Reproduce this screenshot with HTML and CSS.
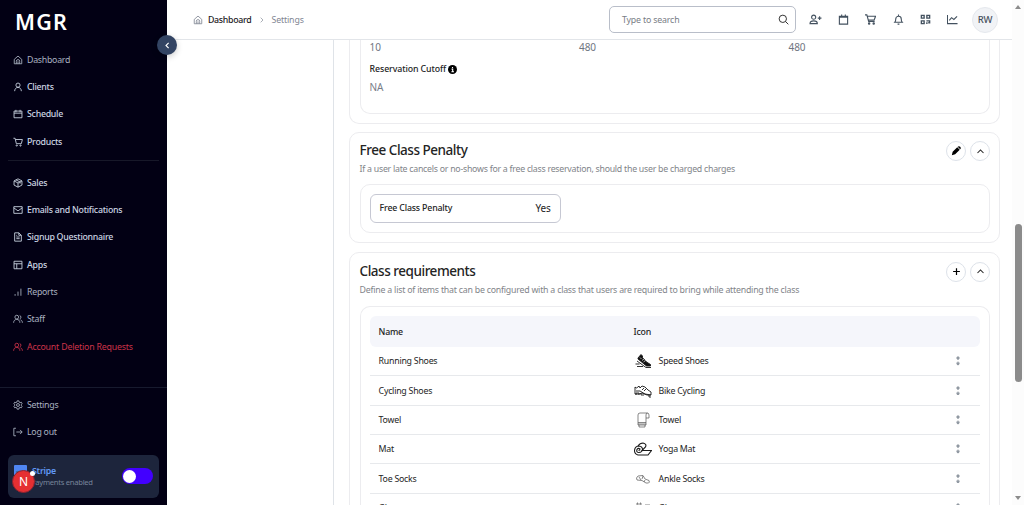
FILE: index.html
```html
<!DOCTYPE html>
<html lang="en">
<head>
<meta charset="utf-8">
<title>MGR - Settings</title>
<link rel="stylesheet" href="styles.css">
</head>
<body>
<svg class="defs" width="0" height="0" aria-hidden="true">
  <symbol id="home" viewBox="0 0 24 24"><path d="M3 10.500 12 2.500l9 8V21H3zM8 21v-6a4 4 0 0 1 8 0v6M12 15v6"/></symbol>
  <symbol id="users" viewBox="0 0 24 24"><circle cx="9" cy="7.500" r="4.500"/><path d="M1.500 21c0-5 3-8 7.500-8s7.500 3 7.500 8M16 3.500a4.500 4.500 0 0 1 0 8.500M18 14c3 1 4.500 3.500 4.500 7"/></symbol>
  <symbol id="up" viewBox="0 0 24 24"><path d="m4 16 8-8 8 8"/></symbol>
  <symbol id="cart" viewBox="0 0 24 24"><path d="M1 3h4l3 13h12l2.500-10H6"/><circle cx="9" cy="20.500" r="1.500"/><circle cx="18" cy="20.500" r="1.500"/></symbol>
</svg>
<div class="app">
  <aside class="sidebar">
    <div class="brand">MGR</div>
    <button class="collapse" aria-label="Collapse"><svg class="ic" viewBox="0 0 24 24"><path d="m15 5-7 7 7 7"/></svg></button>
    <nav class="nav">
      <a class="item"><svg class="ic"><use href="#home"/></svg><span>Dashboard</span></a>
      <a class="item strong"><svg class="ic" viewBox="0 0 24 24"><circle cx="12" cy="7.500" r="5"/><path d="M4 22c0-5 3-9 8-9s8 4 8 9"/></svg><span>Clients</span></a>
      <a class="item strong"><svg class="ic" viewBox="0 0 24 24"><path d="M2.500 5h19v16h-19zM2.500 10h19M7 2v6M17 2v6"/></svg><span>Schedule</span></a>
      <a class="item strong"><svg class="ic"><use href="#cart"/></svg><span>Products</span></a>
    </nav>
    <nav class="nav second">
      <a class="item strong"><svg class="ic" viewBox="0 0 24 24"><path d="m12 2 9.500 5v10L12 22l-9.500-5V7zM2.500 7 12 12l9.500-5M12 12v10M7 4.500l10 5v4"/></svg><span>Sales</span></a>
      <a class="item strong"><svg class="ic" viewBox="0 0 24 24"><path d="M2 4h20v16H2zM2 7l10 7 10-7"/></svg><span>Emails and Notifications</span></a>
      <a class="item strong"><svg class="ic" viewBox="0 0 24 24"><path d="M4 2h10l6 6v14H4zM14 2v6h6M8 12h8M8 16h8M8 8h2"/></svg><span>Signup Questionnaire</span></a>
      <a class="item strong"><svg class="ic" viewBox="0 0 24 24"><path d="M2.500 3h19v18h-19zM2.500 9h19M9 9v12"/></svg><span>Apps</span></a>
      <a class="item"><svg class="ic" viewBox="0 0 24 24"><path d="M5 21v-4M12 21V11M19 21V4"/></svg><span>Reports</span></a>
      <a class="item"><svg class="ic"><use href="#users"/></svg><span>Staff</span></a>
      <a class="item danger"><svg class="ic"><use href="#users"/></svg><span>Account Deletion Requests</span></a>
    </nav>
    <div class="foot">
      <a class="item"><svg class="ic" viewBox="0 0 24 24"><path d="m10 2-.700 3-2.300 1.300-3-1L2 9l2.200 2v2L2 15l2 3.700 3-1L9.300 19l.700 3h4l.700-3 2.300-1.300 3 1L22 15l-2.200-2v-2L22 9l-2-3.700-3 1L14.700 5 14 2z"/><circle cx="12" cy="12" r="3.500"/></svg><span>Settings</span></a>
      <a class="item"><svg class="ic" viewBox="0 0 24 24"><path d="M7 3H2v18h5M8 12h14M17 7l5 5-5 5"/></svg><span>Log out</span></a>
      <div class="stripe">
        <span class="stripe-logo">stripe</span>
        <div class="stripe-text"><b>Stripe</b><small>Payments enabled</small></div>
        <span class="switch"></span>
        <span class="dev">N</span><span class="dot"></span>
      </div>
    </div>
  </aside>
  <div class="page">
    <header class="top">
      <div class="crumbs"><svg class="ic"><use href="#home"/></svg><b>Dashboard</b><svg class="ic sep" viewBox="0 0 24 24"><path d="m8 5 7 7-7 7"/></svg><span>Settings</span></div>
      <div class="search"><span>Type to search</span><svg class="ic" viewBox="0 0 24 24"><circle cx="10.500" cy="10.500" r="8"/><path d="m16.500 16.500 6 6"/></svg></div>
      <div class="actions">
        <svg class="ic" viewBox="0 0 28 24"><circle cx="10" cy="7" r="4.500"/><path d="M2 21c0-5 3-6 8-6s8 1 8 6zM23 5v8M19 9h8"/></svg>
        <svg class="ic" viewBox="0 0 24 24"><path d="M3 5h18v17H3zM3 7h18M8 1v5M16 1v5"/></svg>
        <svg class="ic" viewBox="0 0 24 24"><path d="M0 2h4l4 14h13M5 5h18l-3 8H7"/><circle cx="9" cy="20.500" r="1.500"/><circle cx="19" cy="20.500" r="1.500"/></svg>
        <svg class="ic" viewBox="0 0 24 24"><path d="M12 1v3M4 18c2-2 2-4 2-7a6 6 0 0 1 12 0c0 3 0 5 2 7zM10 22h4"/></svg>
        <svg class="ic qr" viewBox="0 0 24 24"><path d="M3 3h6v6H3zM15 3h6v6h-6zM3 15h6v6H3zM14 15h7v4h-3M15 18v4"/></svg>
        <svg class="ic" viewBox="0 0 24 24"><path d="M1 2v19h22M5 14l5-6 5 4 7-7"/></svg>
      </div>
      <div class="avatar">RW</div>
    </header>
    <div class="body">
      <div class="subnav"></div>
      <main class="content">
        <section class="card cut">
          <div class="inner">
            <div class="values"><span>10</span><span>480</span><span>480</span></div>
            <div class="label"><span>Reservation Cutoff</span><svg viewBox="0 0 24 24"><circle cx="12" cy="12" r="12"/><path d="M12 5v3M9.500 11h3v7M9 18h7"/></svg></div>
            <div class="na">NA</div>
          </div>
        </section>
        <section class="card penalty">
          <div class="head"><div><h2>Free Class Penalty</h2><p>If a user late cancels or no-shows for a free class reservation, should the user be charged charges</p></div>
            <div class="btns"><button aria-label="Edit"><svg class="pencil" viewBox="0 0 24 24"><path d="m2 22 2-8L15 3l6 6L10 20zM16 2q3-3 6 0t0 6z"/></svg></button><button aria-label="Collapse"><svg class="ic"><use href="#up"/></svg></button></div></div>
          <div class="inner"><div class="field"><b>Free Class Penalty</b><span>Yes</span></div></div>
        </section>
        <section class="card reqs">
          <div class="head"><div><h2>Class requirements</h2><p class="wide">Define a list of items that can be configured with a class that users are required to bring while attending the class</p></div>
            <div class="btns"><button aria-label="Add"><svg class="ic plus" viewBox="0 0 24 24"><path d="M12 3v18M3 12h18"/></svg></button><button aria-label="Collapse"><svg class="ic"><use href="#up"/></svg></button></div></div>
          <div class="inner">
            <div class="row th"><span>Name</span><span>Icon</span></div>
            <div class="row"><span>Running Shoes</span><svg class="pic" viewBox="0 0 18 16"><path class="fill" d="M4 5 7 1.500l1.500 1.500v1.500l4 4.500 4 2.500V13h-4L4 6z"/><path class="cutline" d="m8 7.500 2-1.500M9.500 9l2-1.500M6 4.500 7.500 6"/><path d="M3 8l9 6.500h5M1.500 11h4M3 13.500h6"/></svg><span>Speed Shoes</span><i></i></div>
            <div class="row"><span>Cycling Shoes</span><svg class="pic" viewBox="0 0 18 16"><path d="M1 4q1 2 3 0l1-1 1 2 2-2 3 1 3 3 3 2v3h-4l-5-2-3 1H1V4M2 8h4l5 3 6 1M2 12v-2h3v2M7 10v2h3M10 5 8 7M12 6l-2 2M15 12v2h2"/></svg><span>Bike Cycling</span><i></i></div>
            <div class="row"><span>Towel</span><svg class="pic light" viewBox="0 0 18 16"><path d="M4 3q0-2 2-2h7q2 0 2 2v3h-3M4 3v10h8V3q0-2 1.500-2M4 10.500h8M4 12h8M5 13v2h6v-2"/></svg><span>Towel</span><i></i></div>
            <div class="row"><span>Mat</span><svg class="pic mat" viewBox="0 0 18 16"><path d="M4 5q2-3 5-3 4 1 2.500 4L8 9.500h9.500L14 14H4q-3.500-1-3.500-4.500Q1 5 5 5q3.500.500 3.500 3.500-.500 3-3.500 3t-2-3q1-2 3-.500 0 1.500-1.500 1.500"/></svg><span>Yoga Mat</span><i></i></div>
            <div class="row"><span>Toe Socks</span><svg class="pic light" viewBox="0 0 18 16"><path d="M2.500 7 4 5l5-.500 2 3.500 4 1.500q1 2-.500 2.500H12L8 9.500 3 9zM5 6l2 3M9 5l-1 3M11 9l-1 2"/></svg><span>Ankle Socks</span><i></i></div>
            <div class="row"><span>Gloves</span><svg class="pic light" viewBox="0 0 18 16"><path d="M3 5V3h1v3M6 5V3h1v3M3 6h6v5H3zM11 5h5v6h-5z"/></svg><span>Gloves</span><i></i></div>
          </div>
        </section>
      </main>
    </div>
  </div>
  <div class="scrollbar"><span class="arrow-up"></span><span class="thumb"></span><span class="arrow-down"></span></div>
</div>
</body>
</html>
```
FILE: styles.css
```css
* { box-sizing: border-box; }
body { margin: 0; font-family: "Noto Sans", "Open Sans", sans-serif; font-size: 8.8px; letter-spacing: -.03em; color: #242424; background: #fff; white-space: nowrap; }
.defs { position: absolute; }
button { padding: 0; }
.ic { width: 10px; height: 10px; fill: none; stroke: currentColor; stroke-width: 2; flex: none; }
.app { display: flex; width: 1024px; height: 505px; overflow: hidden; }
.sidebar { position: relative; z-index: 2; width: 167px; background: #020014; display: flex; flex-direction: column; flex: none; color: #a9b1c0; }
.brand { height: 46px; padding: 6px 0 0 15px; font-size: 21.500px; line-height: 31px; font-weight: 600; letter-spacing: 1.200px; color: #fff; }
.collapse { position: absolute; left: 157px; top: 35px; width: 20px; height: 20px; border: 0; border-radius: 50%; background: #334463; color: #fff; display: grid; place-items: center; box-shadow: 0 2px 6px #0003; }
.collapse .ic { width: 9px; height: 9px; stroke-width: 3; }
.nav { margin: 0 8px; padding: 0 4.500px; }
.second { margin-top: 4.500px; padding-top: 8px; border-top: 1px solid #171829; }
.item { display: flex; align-items: center; gap: 4.500px; height: 27.350px; }
.nav .ic, .foot .ic { stroke-width: 2.100; }
.item.strong { color: #cbd4e2; font-weight: 500; letter-spacing: -.03em; }
.item.danger { color: #cc3349; letter-spacing: -.022em; }
.foot { margin-top: auto; padding: 3.500px 8px 8px; height: 118px; border-top: 1px solid #171a2e; }
.foot .item { padding-left: 4.500px; height: 27.200px; }
.stripe { position: relative; height: 43px; margin-top: 9px; border-radius: 6px; background: #1d253c; display: flex; padding: 0 6px; align-items: center; gap: 5px; }
.stripe-logo { width: 13px; height: 13px; align-self: flex-start; margin-top: 10px; font-size: 4px; line-height: 13px; text-align: center; background: #4f86f3; color: #244; border-radius: 1px; }
.stripe-text { flex: 1; display: flex; flex-direction: column; }
.stripe-text b { font-weight: 600; color: #6198f5; line-height: 11px; }
.stripe-text small { margin-left: -1px; font-size: 7.600px; line-height: 10px; color: #77849a; }
.switch { width: 31px; height: 16px; border-radius: 8px; background: #4200ff; display: flex; align-items: center; padding: 0 1px; }
.switch::before { content: ""; width: 13px; height: 13px; border-radius: 50%; background: #fff; }
.dev { position: absolute; left: 4px; top: 15px; width: 23px; height: 23px; border: 1px solid #8a2330; border-radius: 50%; background: #e52f32; color: #fff; font-size: 12px; line-height: 21px; text-align: center; }
.dot { position: absolute; left: 22px; top: 16px; width: 5px; height: 5px; border-radius: 50%; background: #fff; }
.page { width: 845px; display: flex; flex-direction: column; flex: none; }
.top { height: 40px; flex: none; border-bottom: 1px solid #e2e5e9; display: flex; align-items: center; padding: 0 14px 0 26px; }
.crumbs { display: flex; align-items: center; gap: 5px; width: 416px; color: #7f8693; letter-spacing: -.018em; }
.crumbs b { width: 43.500px; font-weight: 500; color: #1c2024; letter-spacing: -.035em; }
.crumbs .sep { width: 8px; height: 8px; margin: 0 1px; }
.search { width: 187px; height: 27px; border: 1px solid #b9bec9; border-radius: 5px; display: flex; align-items: center; justify-content: space-between; padding: 0 6px 0 12px; color: #777d85; letter-spacing: -.02em; }
.search .ic { width: 11px; height: 11px; color: #222; }
.actions { display: flex; justify-content: space-between; width: 149px; margin-left: 13px; color: #43515f; }
.actions .ic { width: 11px; height: 11px; stroke-width: 2.400; }
.actions .ic:first-child { width: 13px; }
.actions .qr { stroke-width: 3; }
.avatar { margin-left: auto; width: 26px; height: 26px; border-radius: 50%; background: #f1f3f6; border: 1px solid #e5e8ed; font-size: 9.500px; line-height: 24px; text-align: center; font-weight: 500; color: #46505d; }
.body { display: flex; height: 465px; overflow: hidden; }
.subnav { width: 167px; border-right: 1px solid #dfe3e8; flex: none; }
.content { width: 666px; padding-left: 15px; display: flex; flex-direction: column; flex: none; }
.card { width: 651px; border: 1px solid #ececef; border-radius: 10px; padding: 0 9px 0 9.600px; flex: none; }
.inner { border: 1px solid #ececef; border-radius: 10px; padding: 9px; }
.cut { height: 84px; border-top: 0; border-radius: 0 0 10px 10px; }
.cut .inner { height: 74px; border-top: 0; border-radius: 0 0 10px 10px; padding-top: 0; }
.values { display: grid; grid-template-columns: 209.500px 209.500px 1fr; font-size: 10px; line-height: 15px; letter-spacing: -.01em; color: #70757f; }
.label { display: flex; align-items: center; gap: 2px; height: 13px; margin-top: 7.500px; font-weight: 500; letter-spacing: -.012em; }
.label svg { width: 9px; height: 9px; }
.label path { stroke: #fff; stroke-width: 3; fill: none; }
.na { font-size: 10px; line-height: 15px; margin-top: 4px; color: #787d88; }
.penalty { height: 111px; margin-top: 8px; }
.head { display: flex; justify-content: space-between; height: 51px; padding-top: 6px; }
h2 { margin: 0; padding-top: 1px; font-size: 13.500px; line-height: 20px; font-weight: 500; letter-spacing: -.035em; }
p { margin: 3px 0 0; line-height: 13px; color: #818489; }
.wide { letter-spacing: -.026em; }
.btns { display: flex; gap: 4px; padding-top: 2px; }
.btns button { width: 20px; height: 20px; border: 1px solid #dde2e9; border-radius: 50%; background: #fff; display: grid; place-items: center; color: #222; }
.btns .ic { width: 9px; height: 9px; stroke-width: 2.800; }
.btns .plus { stroke-width: 3.200; color: #000; }
.pencil { width: 10px; height: 10px; }
.penalty .inner { height: 49px; }
.field { width: 191px; height: 28.500px; border: 1px solid #c6c8d3; border-radius: 6px; display: flex; align-items: center; justify-content: space-between; padding: 0 9px; letter-spacing: -.02em; }
.field b { font-weight: 500; }
.field span { font-size: 10px; }
.reqs { margin-top: 9px; height: 270px; }
.reqs .head { height: 53px; padding-top: 6.600px; }
.reqs .inner { height: 230px; border-bottom: 0; border-radius: 10px 10px 0 0; }
.row { display: grid; grid-template-columns: 255px 25px 1fr 42px; align-items: center; height: 29.350px; padding-left: 9px; border-bottom: 1px solid #e7e9ec; letter-spacing: -.028em; }
.row.th { height: 31px; border: 0; border-radius: 6px; background: #f5f6fb; font-weight: 500; }
.row i { width: 4px; height: 9.500px; margin-left: 18px; background: radial-gradient(circle at 2px 2px, #9199a2 1.300px, transparent 1.900px) 0 0 / 4px 5.500px; }
.pic { width: 18px; height: 16px; fill: none; stroke: #191919; stroke-width: .9; }
.pic .fill { fill: #111; }
.pic .cutline { stroke: #fff; stroke-width: .7; }
.pic.light { stroke: #555; stroke-width: .7; }
.pic.mat { stroke-width: 1.100; }
.scrollbar { width: 12px; background: #fcfcfc; display: flex; flex-direction: column; align-items: center; flex: none; }
.arrow-up { margin-top: 5px; border: 3.500px solid transparent; border-top: 0; border-bottom: 4px solid #8b8b8b; }
.thumb { width: 7px; height: 158px; margin-top: 215px; border-radius: 4px; background: #8b8b8b; }
.arrow-down { margin-top: auto; margin-bottom: 5px; border: 3.500px solid transparent; border-bottom: 0; border-top: 4px solid #8b8b8b; }
```
